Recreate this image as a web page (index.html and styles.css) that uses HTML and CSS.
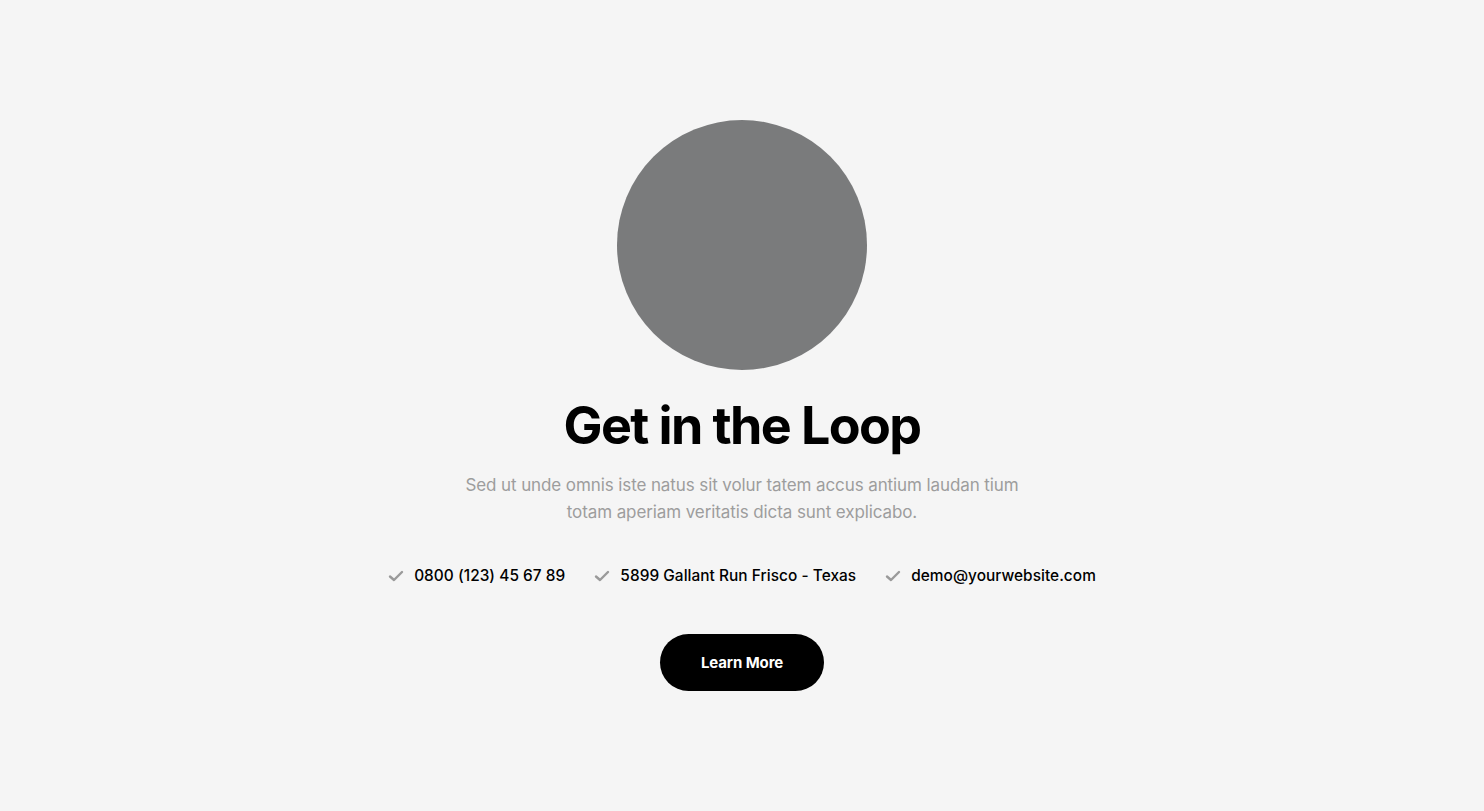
FILE: index.html
```html
<!DOCTYPE html>
<html lang="en">
<head>
<meta charset="utf-8">
<title>Get in the Loop</title>
<link rel="stylesheet" href="styles.css">
</head>
<body>
<section class="loop">
  <div class="avatar"></div>
  <h1 class="title">Get in the Loop</h1>
  <p class="lead">Sed ut unde omnis iste natus sit volur tatem accus antium laudan tium totam aperiam veritatis dicta sunt explicabo.</p>
  <ul class="contacts">
    <li class="contact"><svg class="check" viewBox="0 0 16 16"><path d="M2 8.5 L6 12 L14 4" /></svg><span>0800 (123) 45 67 89</span></li>
    <li class="contact"><svg class="check" viewBox="0 0 16 16"><path d="M2 8.5 L6 12 L14 4" /></svg><span>5899 Gallant Run Frisco - Texas</span></li>
    <li class="contact"><svg class="check" viewBox="0 0 16 16"><path d="M2 8.5 L6 12 L14 4" /></svg><span>demo@yourwebsite.com</span></li>
  </ul>
  <a class="btn" href="#">Learn More</a>
</section>
</body>
</html>
```

FILE: styles.css
```css
* { box-sizing: border-box; }
html, body { margin: 0; padding: 0; }
body {
  background: #f5f5f5;
  font-family: Inter, "Noto Sans", sans-serif;
  color: #000;
  min-height: 811px;
}
.loop {
  display: flex;
  flex-direction: column;
  align-items: center;
  padding-top: 120px;
}
.avatar {
  width: 250px;
  height: 250px;
  border-radius: 50%;
  background: #7a7b7c;
}
.title {
  margin: 24px 0 0;
  font-size: 52px;
  line-height: 64px;
  font-weight: 700;
  letter-spacing: -1.6px;
}
.lead {
  margin: 14px 0 0;
  width: 590px;
  text-align: center;
  font-size: 17px;
  line-height: 27px;
  color: #9d9d9d;
  letter-spacing: -0.1px;
}
.contacts {
  list-style: none;
  margin: 38px 0 0;
  padding: 0;
  display: flex;
  gap: 29px;
}
.contact {
  display: flex;
  align-items: center;
  gap: 10px;
  font-size: 15.4px;
  line-height: 24px;
  font-weight: 500;
  letter-spacing: 0.05px;
}
.check {
  width: 16px;
  height: 16px;
  fill: none;
  stroke: #9a9a9a;
  stroke-width: 2.4;
  stroke-linecap: round;
  stroke-linejoin: round;
}
.btn {
  margin-top: 46px;
  width: 164px;
  height: 57px;
  border-radius: 29px;
  background: #000;
  color: #fff;
  text-decoration: none;
  font-size: 15px;
  font-weight: 700;
  display: flex;
  align-items: center;
  justify-content: center;
  letter-spacing: -0.1px;
}
```
